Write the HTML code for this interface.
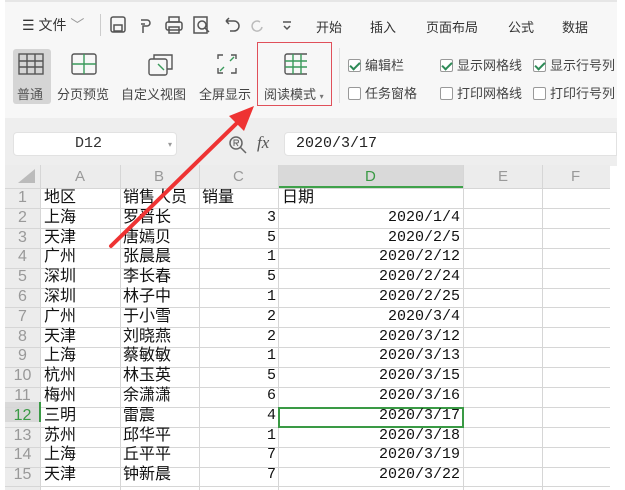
<!DOCTYPE html>
<html><head><meta charset="utf-8">
<style>
*{margin:0;padding:0;box-sizing:border-box}
body{width:625px;height:490px;overflow:hidden;background:#fff;font-family:"Liberation Sans","Noto Sans CJK SC",sans-serif;position:relative}
.a{position:absolute}
.rib{left:5px;top:0;width:612px;height:118px;background:#f7f7f7;border-top:2px solid #e6e6e6}
.t{font-size:13px;color:#333;white-space:nowrap}
.lbl{font-size:13px;color:#444;white-space:nowrap}
.band{left:5px;top:118px;width:612px;height:48px;background:#eeeeee}
.cb{display:inline-block;width:13px;height:13px;border:1px solid #999;background:#fff;vertical-align:-2px;margin-right:4px;position:relative;border-radius:2px}
.cb.on:after{content:"";position:absolute;left:3px;top:0px;width:4px;height:8px;border:solid #2e8b57;border-width:0 2px 2px 0;transform:rotate(45deg)}
.cell{position:absolute;font-size:16px;color:#111;white-space:nowrap;line-height:20px}
.num{font-family:"Liberation Mono",monospace;font-size:15px}
</style></head><body>
<div class="a rib"></div>
<div class="a t" style="left:22px;top:15px;font-size:14px">☰ 文件 <span style="color:#999">﹀</span></div>
<div class="a" style="left:100px;top:14px;width:1px;height:22px;background:#ccc"></div>
<svg class="a" style="left:108px;top:14px" width="190" height="22" fill="none" stroke="#555" stroke-width="1.5">
<rect x="3" y="3" width="14" height="15" rx="2"/><rect x="6" y="11" width="8" height="6"/>
<path d="M33 6h6a3 3 0 010 6h-4v7M33 10l4 0"/>
<rect x="58" y="8" width="16" height="8" rx="2"/><rect x="61" y="3" width="10" height="5"/><rect x="61" y="13" width="10" height="6"/>
<rect x="86" y="3" width="13" height="16"/><circle cx="94" cy="11" r="4"/><path d="M97 14l4 4"/>
<path d="M118 7h8a5 5 0 010 10h-4M118 7l3-3M118 7l3 3"/>
<path d="M152 8a5 5 0 10 2 5" stroke="#bbb"/>
<path d="M175 8h8M176 12l3 3 3-3"/>
</svg>
<div class="a t" style="left:316px;top:17px">开始</div>
<div class="a t" style="left:370px;top:17px">插入</div>
<div class="a t" style="left:426px;top:17px">页面布局</div>
<div class="a t" style="left:508px;top:17px">公式</div>
<div class="a t" style="left:562px;top:17px">数据</div>
<div class="a" style="left:13px;top:49px;width:38px;height:55px;background:#d5d5d5;border-radius:3px"></div>
<svg class="a" style="left:17px;top:53px" width="290" height="26" fill="none" stroke="#555" stroke-width="1.4">
<rect x="2" y="1" width="24" height="20"/><path d="M2 8h24M2 14h24M10 1v20M18 1v20"/>
<rect x="55" y="1" width="24" height="20" rx="2"/><path d="M67 1v20M55 11h24" stroke="#3a9a5b"/>
<rect x="132" y="6" width="18" height="16" rx="2"/><path d="M137 6V2h18v14h-5"/><path d="M141 11l6 6" stroke="#3a9a5b"/>
<path d="M201 6V2h5M214 2h5v4M219 15v5h-5M206 20h-5v-5" /><path d="M207 14l-4 4M213 8l4-4" stroke="#3a9a5b"/>
<rect x="268" y="1" width="24" height="20" rx="2"/><path d="M276 1v20M284 1v20M268 8h24M268 14h24" stroke="#3a9a5b"/>
</svg>
<div class="a lbl" style="left:17px;top:84px;color:#555">普通</div>
<div class="a lbl" style="left:57px;top:84px">分页预览</div>
<div class="a lbl" style="left:121px;top:84px">自定义视图</div>
<div class="a lbl" style="left:199px;top:84px">全屏显示</div>
<div class="a lbl" style="left:264px;top:84px">阅读模式 <span style="font-size:8px;color:#777">▾</span></div>
<div class="a" style="left:257px;top:42px;width:75px;height:64px;border:1.5px solid #e0505a"></div>
<div class="a" style="left:339px;top:48px;width:1px;height:55px;background:#e0e0e0"></div>
<div class="a lbl" style="left:348px;top:55px"><span class="cb on"></span>编辑栏</div>
<div class="a lbl" style="left:348px;top:83px"><span class="cb"></span>任务窗格</div>
<div class="a lbl" style="left:440px;top:55px"><span class="cb on"></span>显示网格线</div>
<div class="a lbl" style="left:440px;top:83px"><span class="cb"></span>打印网格线</div>
<div class="a lbl" style="left:533px;top:55px;width:84px;overflow:hidden"><span class="cb on"></span>显示行号列</div>
<div class="a lbl" style="left:533px;top:83px;width:84px;overflow:hidden"><span class="cb"></span>打印行号列</div>
<div class="a band"></div>
<div class="a" style="left:13px;top:132px;width:164px;height:24px;background:#fff;border-radius:4px;border:1px solid #e2e2e2"></div>
<div class="a num" style="left:75px;top:135px;color:#333">D12</div>
<div class="a" style="left:168px;top:140px;font-size:8px;color:#999">▾</div>
<svg class="a" style="left:228px;top:135px" width="22" height="20" fill="none" stroke="#666" stroke-width="1.5"><circle cx="8" cy="8" r="6"/><path d="M12 12l6 6"/><path d="M6 11V5h3a1.5 1.5 0 010 3H6M8 8l2 3" stroke-width="1"/></svg>
<div class="a" style="left:257px;top:133px;font-family:'Liberation Serif',serif;font-style:italic;font-size:17px;color:#555">fx</div>
<div class="a" style="left:284px;top:132px;width:333px;height:24px;background:#fff;border-radius:4px 0 0 4px;border:1px solid #e2e2e2"></div>
<div class="a num" style="left:296px;top:135px;color:#222">2020/3/17</div>
<div class="a" style="left:5px;top:165px;width:605px;height:23px;background:#ececec"></div>
<div class="a" style="left:5px;top:165px;width:35px;height:325px;background:#ececec"></div>
<div class="a" style="left:278px;top:165px;width:185px;height:23px;background:#d9d9d9;border-bottom:2px solid #3fa14a"></div>
<div class="a" style="left:5px;top:402px;width:35px;height:20px;background:#d9d9d9"></div>
<svg class="a" style="left:0;top:165px" width="625" height="325">
<g stroke="#d6d6d6" stroke-width="1">
<path d="M40.5 0v325M120.5 0v325M199.5 0v325M278.5 0v325M463.5 0v325M542.5 0v325"/>
<path d="M5 23.5h605M5 43.5h605M5 63.5h605M5 83.5h605M5 103.5h605M5 123.5h605M5 142.5h605M5 162.5h605M5 182.5h605M5 202.5h605M5 222.5h605M5 242.5h605M5 262.5h605M5 282.5h605M5 302.5h605M5 321.5h605"/>
</g>
<path d="M18 18L35 18L35 4Z" fill="#bbb"/>
</svg>
<div class="a" style="left:278px;top:407px;width:186px;height:21px;border:2.5px solid #3a9a45"></div>
<div class="a" style="left:39px;top:402px;width:2px;height:20px;background:#3a9a45"></div>
<div id="g"></div>
<script>
var hdr=[["A",80],["B",159],["C",238],["D",370],["E",503],["F",576]];
var h='';
hdr.forEach(function(x){h+='<div class="a" style="left:'+(x[1]-5)+'px;top:168px;font-size:15px;color:'+(x[0]=="D"?"#3a9a45":"#999")+'">'+x[0]+'</div>';});
var d=[["地区","销售人员","销量","日期"],["上海","罗晋长","3","2020/1/4"],["天津","唐嫣贝","5","2020/2/5"],["广州","张晨晨","1","2020/2/12"],["深圳","李长春","5","2020/2/24"],["深圳","林子中","1","2020/2/25"],["广州","于小雪","2","2020/3/4"],["天津","刘晓燕","2","2020/3/12"],["上海","蔡敏敏","1","2020/3/13"],["杭州","林玉英","5","2020/3/15"],["梅州","余潇潇","6","2020/3/16"],["三明","雷震","4","2020/3/17"],["苏州","邱华平","1","2020/3/18"],["上海","丘平平","7","2020/3/19"],["天津","钟新晨","7","2020/3/22"]];
for(var i=0;i<15;i++){var y=188+i*19.8;
h+='<div class="a cell" style="left:5px;width:35px;text-align:center;top:'+y+'px;color:'+(i==11?"#3a9a45":"#999")+'">'+(i+1)+'</div>';
h+='<div class="a cell" style="left:44px;top:'+y+'px">'+d[i][0]+'</div>';
h+='<div class="a cell" style="left:123px;top:'+y+'px">'+d[i][1]+'</div>';
if(i==0){h+='<div class="a cell" style="left:202px;top:'+y+'px">'+d[i][2]+'</div><div class="a cell" style="left:282px;top:'+y+'px">'+d[i][3]+'</div>';}
else{h+='<div class="a cell num" style="left:199px;width:77px;text-align:right;top:'+y+'px">'+d[i][2]+'</div><div class="a cell num" style="left:278px;width:182px;text-align:right;top:'+y+'px">'+d[i][3]+'</div>';}
}
document.getElementById('g').innerHTML=h;
</script>
<svg class="a" style="left:0;top:0" width="625" height="490"><path d="M111 246L238 122" stroke="#ee3333" stroke-width="4" stroke-linecap="round"/><path d="M254 106L229 116L244 131Z" fill="#ee3333"/></svg>
</body></html>
